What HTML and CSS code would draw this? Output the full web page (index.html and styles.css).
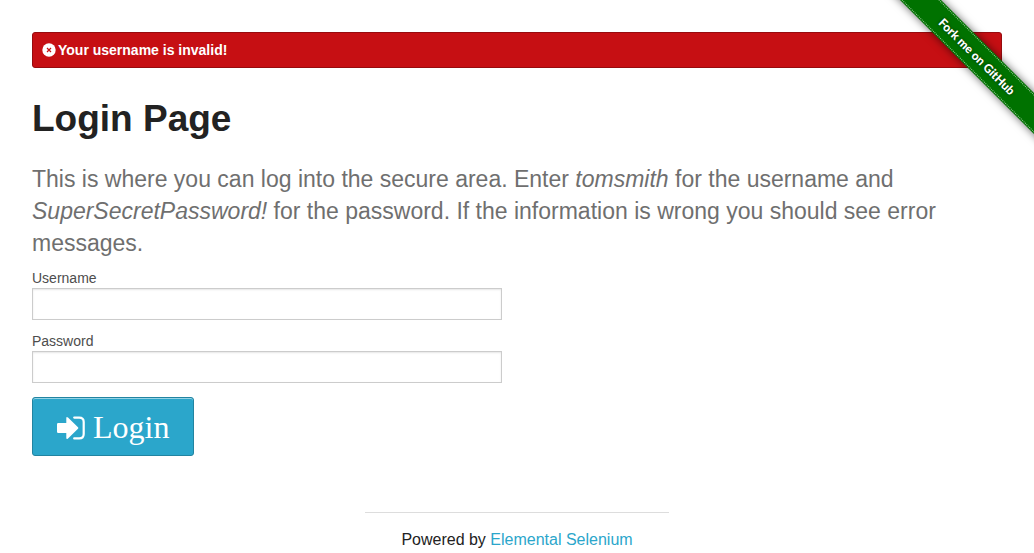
FILE: index.html
```html
<!DOCTYPE html>
<html lang="en">
<head>
<meta charset="utf-8">
<meta name="viewport" content="width=device-width, initial-scale=1">
<title>Login Page</title>
<link rel="stylesheet" href="styles.css">
</head>
<body>
<div class="ribbon-corner"><a class="ribbon" href="#"><span class="ribbon-text">Fork me on GitHub</span></a></div>
<div class="alert" role="alert">
  <svg class="alert-icon" viewBox="0 0 14 14" aria-hidden="true"><circle cx="7" cy="7" r="6.7" fill="#fff"/><path d="M5 5l4 4M9 5l-4 4" stroke="#c60f13" stroke-width="1.2"/></svg>
  <span>Your username is invalid!</span>
</div>
<main>
  <h1 class="title">Login Page</h1>
  <p class="subheader">This is where you can log into the secure area. Enter <em>tomsmith</em> for the username and <em>SuperSecretPassword!</em> for the password. If the information is wrong you should see error messages.</p>
  <form class="login">
    <div class="row">
      <div class="field">
        <label class="label" for="username">Username</label>
        <input class="input" type="text" id="username" name="username">
      </div>
    </div>
    <div class="row">
      <div class="field">
        <label class="label" for="password">Password</label>
        <input class="input" type="password" id="password" name="password">
      </div>
    </div>
    <button class="button" type="button">
      <svg class="button-icon" viewBox="0 0 28 24" aria-hidden="true"><path d="M0 8.2Q0 7 1.2 7H9.3V2.2Q9.3.2 11 1.5L21 11.2Q21.8 12 21 12.8L11 22.5Q9.3 23.8 9.3 21.8V17H1.2Q0 17 0 15.8Z" fill="#fff"/><path d="M17.2 1.6H22.2Q26.7 1.6 26.7 6V18Q26.7 22.4 22.2 22.4H17.2" fill="none" stroke="#fff" stroke-width="2.2" stroke-linecap="round"/></svg>
      <span>Login</span>
    </button>
  </form>
</main>
<footer class="footer">
  <div class="footer-inner">Powered by <a class="link" href="#">Elemental Selenium</a></div>
</footer>
</body>
</html>
```
FILE: styles.css
```css
* {
  box-sizing: border-box;
}
body {
  position: relative;
  margin: 0;
  padding: 32px 32px 0;
  background: #fff;
  color: #222;
  font-family: "Liberation Sans", Arial, sans-serif;
  font-size: 16px;
}
.ribbon-corner {
  position: absolute;
  top: 0;
  right: 0;
  width: 150px;
  height: 150px;
  overflow: hidden;
}
.ribbon {
  position: absolute;
  top: 42px;
  right: -53px;
  width: 220px;
  padding: 1px 0;
  background: #007200;
  box-shadow: 0 0 8px rgba(0, 0, 0, 0.6);
  transform: rotate(45deg);
  color: #fff;
  font-family: Lato, sans-serif;
  font-size: 12px;
  font-weight: 900;
  line-height: 25px;
  text-align: center;
  text-decoration: none;
}
.ribbon-text {
  display: block;
  border-top: 1px dotted #99c799;
  border-bottom: 1px dotted #99c799;
  text-shadow: 0 0 3px rgba(0, 0, 0, 0.6);
}
.alert {
  display: flex;
  align-items: center;
  gap: 2px;
  padding: 8px 9px;
  border: 1px solid #970b0e;
  border-radius: 3px;
  background: #c60f13;
  color: #fff;
  font-size: 14px;
  font-weight: 700;
  line-height: 18px;
}
.alert-icon {
  width: 14px;
  height: 14px;
}
.title {
  margin: 25px 0 18px;
  font-size: 37px;
  line-height: 52px;
}
.subheader {
  margin: 0 0 10px;
  color: #6f6f6f;
  font-size: 23px;
  line-height: 32px;
}
.row {
  display: grid;
  grid-template-columns: 1fr 1fr;
  gap: 30px;
  margin-bottom: 12px;
}
.label {
  display: block;
  color: #4d4d4d;
  font-size: 14px;
  line-height: 19px;
}
.input {
  display: block;
  width: 100%;
  height: 32px;
  padding: 8px;
  border: 1px solid #ccc;
  border-radius: 0;
  background: #fff;
  box-shadow: inset 0 1px 2px rgba(0, 0, 0, 0.1);
  font-size: 14px;
}
.button {
  display: flex;
  align-items: center;
  gap: 8px;
  margin-top: 14px;
  padding: 11px 24px 9px;
  border: 1px solid #2284a1;
  border-radius: 3px;
  background: #2ba6cb;
  box-shadow: inset 0 1px 0 rgba(255, 255, 255, 0.5);
  color: #fff;
  font-family: "Liberation Serif", "Times New Roman", serif;
  font-size: 32px;
  line-height: 37px;
}
.button-icon {
  width: 28px;
  height: 24px;
}
.footer {
  display: grid;
  grid-template-columns: repeat(3, 1fr);
  gap: 30px;
  margin-top: 56px;
}
.footer-inner {
  grid-column: 2;
  padding-top: 14px;
  border-top: 1px solid #ddd;
  line-height: 26px;
  text-align: center;
}
.link {
  color: #2ba6cb;
  text-decoration: none;
}
```
